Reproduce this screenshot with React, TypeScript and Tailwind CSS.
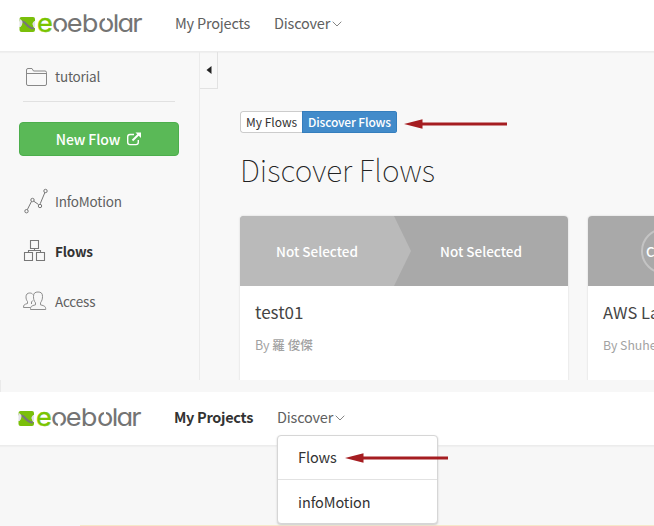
import React from "react";

const sans = "font-['Noto_Sans_CJK_JP',sans-serif]";

function Logo() {
  return (
    <svg width="124" height="24" viewBox="18 11 124 24" className="block shrink-0 overflow-visible">
      <path d="M21.500 17H33q2 0 2 2v2l-1.500 1v5.500L35 28v2q0 2-2 2H21.500q-2 0-2-2v-3q2.500-1 1.500-4l-1.500-2v-2q0-2 2-2z" fill="#7abf0a" />
      <path d="M22 20.500c5 0 5 6 12 7v2c-7 0-8-6-12-7z" fill="#777" />
      <path d="M19.500 19q3 1 3 3.500t-2 4.500h-1zM35 21q-3 1.500-2.500 3.500t2.500 3z" fill="#e1e1e8" />
      <g transform="scale(1.07 1)" fontFamily="Inter, sans-serif" fontSize="25.500" fill="#747474" style={{ fontFeatureSettings: '"cv11"' }}>
        <text x="34.500" y="31.800" fill="#79c400" stroke="#79c400" strokeWidth=".4">e</text>
        <text y="31.800" x="48.700 62.300 76.500 91.700 105.300 109.800 123.700">oebolar</text>
      </g>
      <path d="M59 28.500h2.500v4.500H59zM105 16h2v4h-2zM82 11h38v3.300H82z" fill="#fff" />
    </svg>
  );
}

function Chevron() {
  return (
    <svg width="10" height="6" viewBox="0 0 10 6" className="block" fill="none" stroke="#777" strokeWidth=".9">
      <path d="M.7.7 5 5 9.300.7" />
    </svg>
  );
}

function Arrow({ className }: { className: string }) {
  return (
    <svg width="104" height="12" viewBox="0 0 104 12" className={className} fill="#a51d21">
      <path d="M0 6 18.500 1.200V4.500H103V7.500H18.500V10.800z" />
    </svg>
  );
}

function Header({ second = false }: { second?: boolean }) {
  return (
    <header className={`flex shrink-0 border-b border-[#ececec] bg-white shadow-[0_1px_1px_#f0f0f0] ${second ? "h-[54px] pl-[17px] pt-[13px]" : "h-[52px] pl-[18px] pt-[11px]"}`}>
      <Logo />
      <nav className="flex items-start text-[14.500px] leading-6 tracking-[-0.2px] text-[#606060]">
        <span className={`whitespace-nowrap ${second ? "ml-[33px] w-[103px] font-bold text-[#333] tracking-[-0.3px]" : "ml-[33px] w-[99px]"}`}>My Projects</span>
        <span>Discover</span>
        <span className="ml-[2px] pt-[10px]"><Chevron /></span>
      </nav>
    </header>
  );
}

function FolderIcon() {
  return (
    <svg width="23" height="20" viewBox="0 0 23 20" fill="none" stroke="#888">
      <path d="M1.500 17V3q0-1.500 1.500-1.500h4L8.500 4H20q1.500 0 1.500 1.500V17q0 1.500-1.500 1.500H3Q1.500 18.500 1.500 17zM1.500 6.500h20" />
    </svg>
  );
}

function MotionIcon() {
  return (
    <svg width="26" height="26" viewBox="0 0 26 26" fill="none" stroke="#777">
      <path d="M4.300 21.700 8.500 13.400M10.500 13 15.500 16.500M17.200 15.800 22 4.200" />
      <circle cx="3.500" cy="23.200" r="1.700" /><circle cx="9.500" cy="12" r="1.700" />
      <circle cx="17" cy="18" r="1.700" /><circle cx="22.500" cy="3" r="1.700" />
    </svg>
  );
}

function FlowsIcon() {
  return (
    <svg width="24" height="24" viewBox="0 0 24 24" fill="none" stroke="#777" strokeWidth="1.100">
      <path d="M7.500 1.500h8v8h-8zM1.500 13.500h8v8h-8zM13.500 13.500h8v8h-8zM11.500 9.500v2M5.500 13v-1.500h12V13" />
    </svg>
  );
}

function AccessIcon() {
  return (
    <svg width="25" height="21" viewBox="0 0 25 21" fill="none" stroke="#888" strokeWidth=".95">
      <path d="M7.500 18.500c0-3 .5-3.500 5-4.700v-2c-1.700-2-2-4-2-6.500C10.500 2 12.200 1 15 1s4.500 1 4.500 4.300c0 2.500-.5 4.500-2 6.500v2c4.500 1.200 5.200 1.700 5.200 4.700z" />
      <path d="M7.500 16.500H.5c0-2.700.7-3 4-4v-2C3.300 9 3 7.500 3 5.800 3 3.300 4.500 2 6.700 2c1.500 0 2.500.5 3.200 1.500M9.700 9.500 8.500 11v2" />
    </svg>
  );
}

function ExternalIcon() {
  return (
    <svg width="16" height="14" viewBox="0 0 16 14" fill="none" stroke="white" strokeWidth="1.400">
      <path d="M8 2.500H4Q1.700 2.500 1.700 4.800v5.500q0 2.300 2.300 2.300h6q2.300 0 2.300-2.300V8" />
      <path d="M6.500 8.500 13 2" strokeWidth="1.900" />
      <path d="M9.500.5H15V6z" fill="white" stroke="none" />
    </svg>
  );
}

function NavItem({ icon, label, active = false }: { icon: React.ReactNode; label: string; active?: boolean }) {
  return (
    <div className={`flex h-[50px] items-center text-[13.500px] tracking-[-0.2px] ${active ? "font-bold text-[#333]" : "text-[#606060]"}`}>
      <span className="flex w-8 shrink-0 items-center">{icon}</span>
      <span>{label}</span>
    </div>
  );
}

function Sidebar() {
  return (
    <aside className="w-[200px] shrink-0 border-r border-[#ebebeb] px-[19px]">
      <div className="ml-1 flex h-[50px] w-[152px] items-center border-b border-[#e1e1e1] text-[13.500px] tracking-[-0.2px] text-[#606060]">
        <span className="w-8 pl-[2px]"><FolderIcon /></span>
        <span>tutorial</span>
      </div>
      <button className="mt-[20px] flex h-[34px] w-[160px] items-center justify-center gap-[6px] rounded-[4px] border border-[#4cae4c] bg-[#5ab957] text-[14px] font-medium tracking-[-0.1px] text-white">
        <span>New Flow</span><ExternalIcon />
      </button>
      <div className="ml-1 mt-[20px]">
        <NavItem icon={<MotionIcon />} label="InfoMotion" />
        <NavItem icon={<FlowsIcon />} label="Flows" active />
        <NavItem icon={<AccessIcon />} label="Access" />
      </div>
    </aside>
  );
}

const card = "flex h-[190px] shrink-0 flex-col overflow-hidden rounded-t-[4px] bg-white shadow-[0_0_2px_#ccc]";

function FlowCards() {
  return (
    <div className="mt-[25px] flex gap-5">
      <article className={`${card} w-[328px]`}>
        <div className="flex h-[70px] items-center bg-[#a9a9a9] text-[13.500px] font-medium text-white">
          <div className="flex h-full w-[171px] items-center bg-[#bababa] pl-[36px] [clip-path:polygon(0_0,154px_0,171px_50%,154px_100%,0_100%)]">Not Selected</div>
          <div className="pl-[29px]">Not Selected</div>
        </div>
        <h2 className="pl-[15px] pt-[13px] text-[17px] leading-[26px] text-[#444]">test01</h2>
        <p className="pl-[15px] pt-[9px] text-[12.500px] leading-[22px] text-[#a2a2a2]">By <span className="font-medium">羅 俊傑</span></p>
      </article>
      <article className={`${card} w-[328px]`}>
        <div className="flex h-[70px] items-center bg-[#a9a9a9] pl-[53px] text-[13.500px] font-medium text-white">
          <div className="flex size-[46px] items-center rounded-full border-[2.500px] border-[#c4c4c4] pl-[3px]">C</div>
        </div>
        <h2 className="whitespace-nowrap pl-[15px] pt-[13px] text-[16.500px] leading-[26px] text-[#444]">AWS Lambda</h2>
        <p className="pl-[15px] pt-[9px] text-[12.300px] leading-[22px] text-[#a2a2a2]">By Shuhei</p>
      </article>
    </div>
  );
}

export default function App() {
  return (
    <div className={`h-[526px] w-[654px] overflow-hidden bg-[#f7f7f7] ${sans}`}>
      <section className="flex h-[380px] flex-col overflow-hidden bg-[#f8f8f8]">
        <Header />
        <div className="flex min-h-0 flex-1">
          <Sidebar />
          <div className="flex h-[37px] w-[18px] shrink-0 items-center justify-center border border-l-0 border-t-0 border-[#e2e2e2]">
            <svg width="6" height="8" viewBox="0 0 6 8" fill="#222"><path d="M5.500 0v8L.5 4z" /></svg>
          </div>
          <main className="ml-[22px] min-w-0 flex-1 pt-[59px]">
            <div className="flex items-center">
              <div className="flex h-[22px] w-[157px] shrink-0 overflow-hidden rounded-[3px] text-[12px] leading-[20px]">
                <span className="w-[62px] whitespace-nowrap rounded-l-[3px] border border-r-0 border-[#ccc] bg-white pl-[5px] text-[#333]">My Flows</span>
                <span className="flex-1 whitespace-nowrap border border-[#357ebd] bg-[#428bca] pl-[5px] font-medium tracking-[-0.15px] text-white">Discover Flows</span>
              </div>
              <Arrow className="ml-[7px] mt-[4px] shrink-0" />
            </div>
            <h1 className="mt-[14px] h-[44px] text-[30px] font-thin leading-[44px] text-[#222]">Discover Flows</h1>
            <FlowCards />
          </main>
        </div>
      </section>
      <div className="h-3"><div className="h-full w-px bg-[#eaeaea]" /></div>
      <section className="relative h-[134px]">
        <Header second />
        <div className="ml-20 mt-[79px] h-px bg-[#f6e8c9]" />
        <div className="absolute left-[277px] top-[43px] h-[89px] w-[161px] rounded-[4px] border border-[#d6d6d6] bg-white text-[14.500px] tracking-[-0.1px] text-[#333] shadow-[0_1px_2px_#ccc]">
          <div className="flex h-[44px] items-center border-b border-[#e2e2e2] pl-[20px]">
            <span className="-mt-[2px] w-[39px]">Flows</span><Arrow className="ml-[8px] shrink-0" />
          </div>
          <div className="flex h-[44px] items-center pl-[20px]">infoMotion</div>
        </div>
      </section>
    </div>
  );
}
